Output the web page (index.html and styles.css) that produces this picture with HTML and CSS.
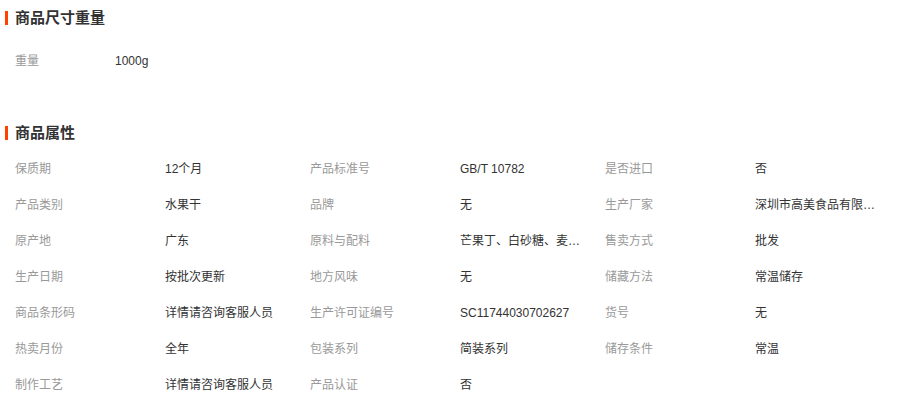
FILE: index.html
```html
<!DOCTYPE html>
<html>
<head>
<meta charset="UTF-8">
<title>商品参数</title>
<link rel="stylesheet" href="styles.css">
</head>
<body>
  <div class="section">
    <h3 class="section-title">商品尺寸重量</h3>
    <div class="size-list">
      <span class="label">重量</span>
      <span class="value">1000g</span>
    </div>
  </div>

  <div class="section attrs">
    <h3 class="section-title">商品属性</h3>
    <div class="attr-list">
      <span class="label">保质期</span><span class="value">12个月</span>
      <span class="label">产品标准号</span><span class="value">GB/T 10782</span>
      <span class="label">是否进口</span><span class="value">否</span>

      <span class="label">产品类别</span><span class="value">水果干</span>
      <span class="label">品牌</span><span class="value">无</span>
      <span class="label">生产厂家</span><span class="value" title="深圳市高美食品有限公司">深圳市高美食品有限…</span>

      <span class="label">原产地</span><span class="value">广东</span>
      <span class="label">原料与配料</span><span class="value" title="芒果丁、白砂糖、麦芽糊精">芒果丁、白砂糖、麦…</span>
      <span class="label">售卖方式</span><span class="value">批发</span>

      <span class="label">生产日期</span><span class="value">按批次更新</span>
      <span class="label">地方风味</span><span class="value">无</span>
      <span class="label">储藏方法</span><span class="value">常温储存</span>

      <span class="label">商品条形码</span><span class="value">详情请咨询客服人员</span>
      <span class="label">生产许可证编号</span><span class="value">SC11744030702627</span>
      <span class="label">货号</span><span class="value">无</span>

      <span class="label">热卖月份</span><span class="value">全年</span>
      <span class="label">包装系列</span><span class="value">简装系列</span>
      <span class="label">储存条件</span><span class="value">常温</span>

      <span class="label">制作工艺</span><span class="value">详情请咨询客服人员</span>
      <span class="label">产品认证</span><span class="value">否</span>
    </div>
  </div>
</body>
</html>
```

FILE: styles.css
```css
body {
  margin: 0;
  font-family: Tahoma, "Liberation Sans", "Noto Sans CJK SC", sans-serif;
  font-size: 12px;
  color: #333;
  background: #fff;
}

.section {
  padding-top: 11px;
}

.section.attrs {
  padding-top: 47px;
}

/* 标题左侧橙色竖条 */
.section-title {
  margin: 0 0 0 5px;
  padding-left: 7px;
  border-left: 3px solid #ff4200;
  font-size: 15px;
  font-weight: bold;
  line-height: 14px;
  height: 14px;
  color: #333;
}

.size-list {
  display: flex;
  padding: 18px 0 0 15px;
  line-height: 36px;
}

.size-list .label {
  width: 100px;
}

.attr-list {
  display: grid;
  grid-template-columns: 150px 145px 150px 145px 150px 145px;
  padding: 11px 0 0 15px;
  line-height: 36px;
}

.label {
  color: #999;
}

.value {
  color: #333;
  white-space: nowrap;
}
```
